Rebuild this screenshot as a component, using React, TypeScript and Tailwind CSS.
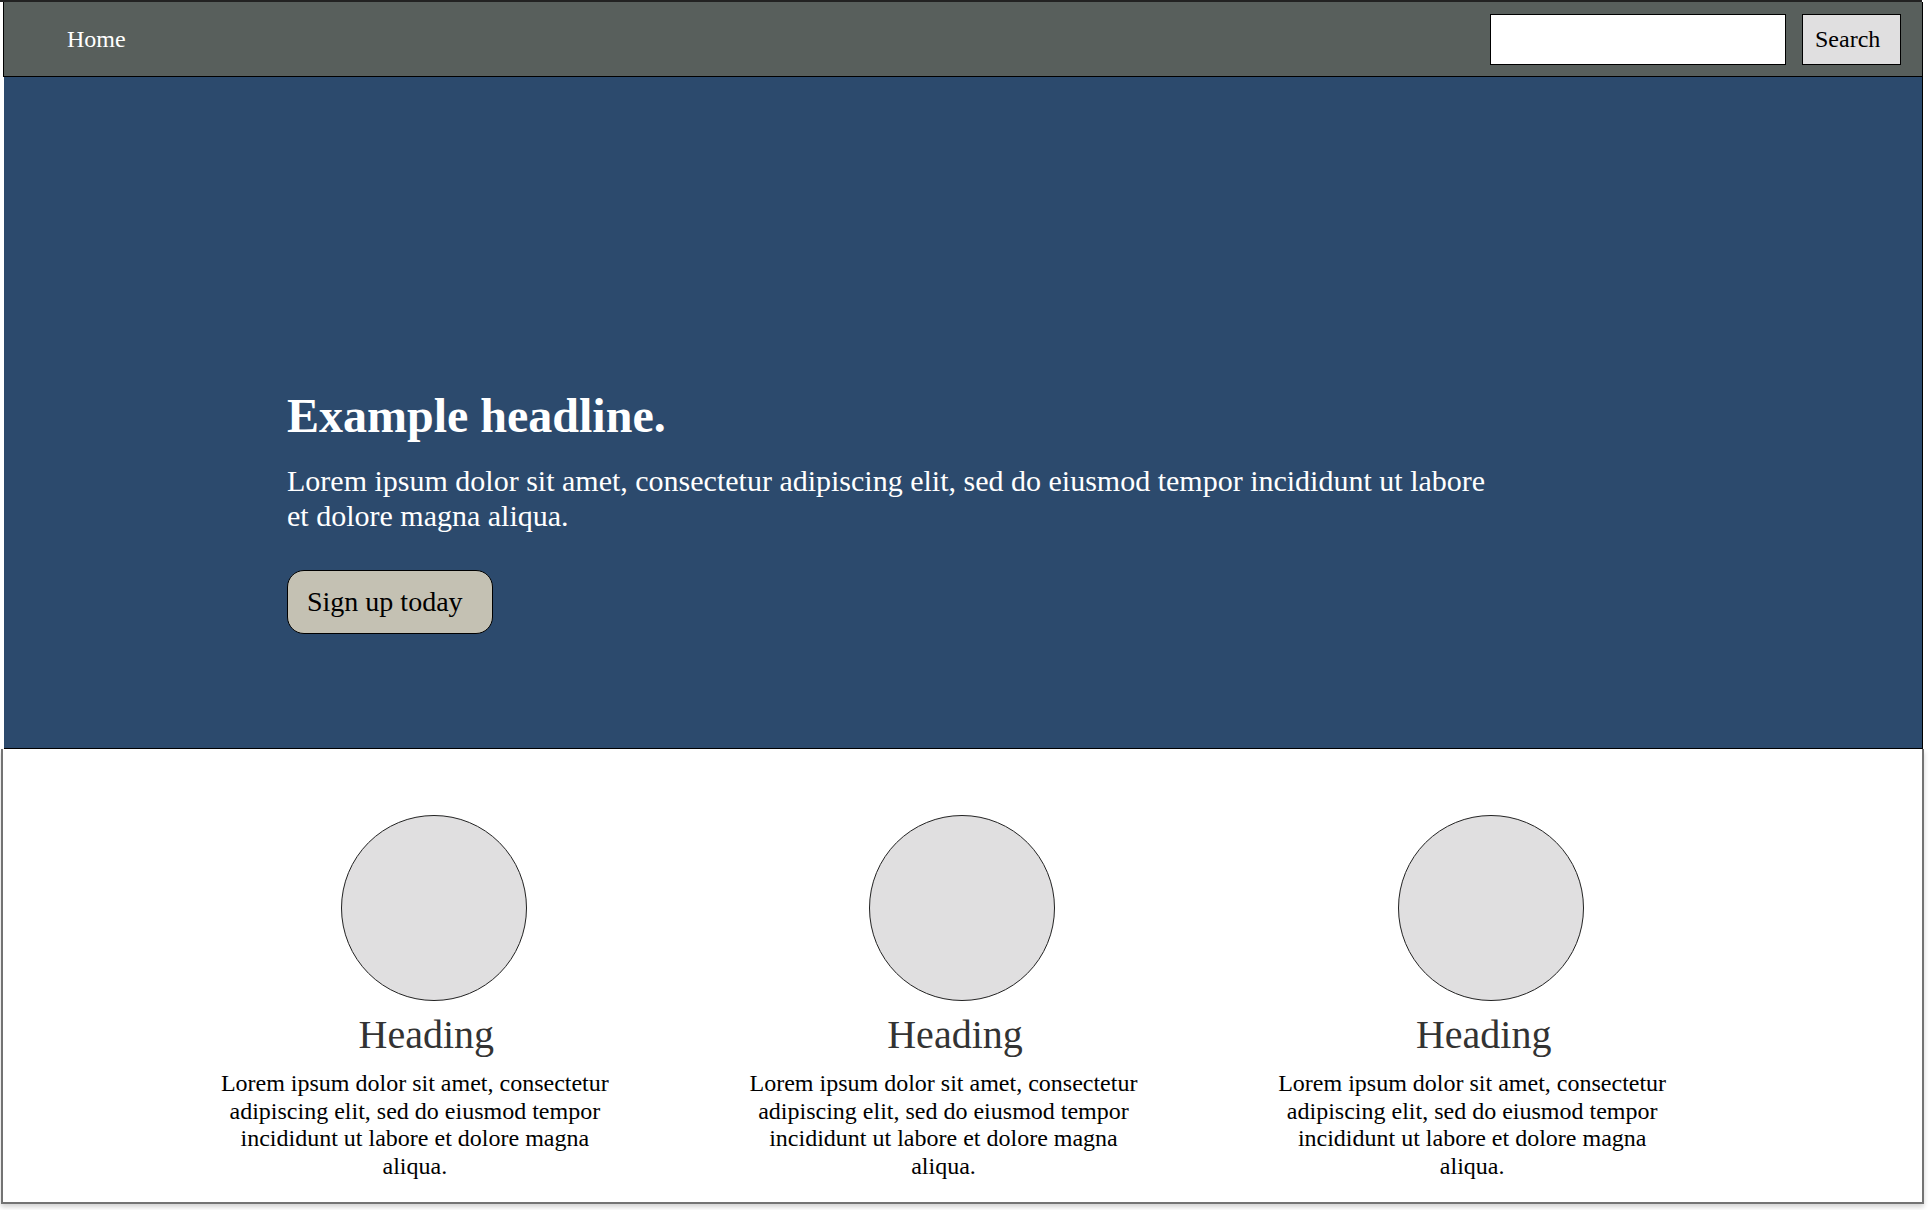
import React from "react";

const serif = "font-['Liberation_Serif','Times_New_Roman',serif]";

function Feature() {
  return (
    <div className="flex flex-col items-center">
      <div className="w-[186px] h-[186px] rounded-full bg-[#e0dfe0] border border-[#222]" />
      <h2 className="mt-[12px] mr-[15px] text-[40px] leading-[44px] text-[#333] font-normal">Heading</h2>
      <p className="mt-[13px] mr-[38px] w-[400px] text-center text-[24px] leading-[27.6px] text-black">
        Lorem ipsum dolor sit amet, consectetur adipiscing elit, sed do eiusmod tempor incididunt ut labore et dolore magna aliqua.
      </p>
    </div>
  );
}

export default function App() {
  return (
    <div className={`${serif} w-[1932px] h-[1210px] bg-white flex flex-col`}>
      <div className="h-[2px] w-[1922px] bg-[#222]" />
      <nav className="ml-[3px] w-[1920px] h-[75px] bg-[#585f5c] border-x border-b border-black flex items-center pl-[63px] pr-[21px]">
        <a className="text-white text-[24px] leading-[27px]">Home</a>
        <div className="ml-auto flex items-center gap-[16px]">
          <input
            type="text"
            className="w-[296px] h-[51px] bg-white border border-black outline-none px-2 text-[22px]"
          />
          <button className="w-[99px] h-[51px] bg-[#e0dfe0] border border-black text-left pl-[12px] text-[24px] text-black">
            Search
          </button>
        </div>
      </nav>
      <section className="ml-[4px] w-[1919px] h-[672px] bg-[#2c4a6d] border-r border-b border-black pt-[312px] pl-[283px]">
        <div className="w-[1220px]">
          <h1 className="text-[48px] leading-[53px] font-bold text-white">Example headline.</h1>
          <p className="mt-[22px] text-[30px] leading-[34.5px] text-white">
            Lorem ipsum dolor sit amet, consectetur adipiscing elit, sed do eiusmod tempor incididunt ut labore et dolore magna aliqua.
          </p>
          <button className="mt-[37px] w-[206px] h-[64px] rounded-[17px] bg-[#c4c1b3] border border-black text-left pl-[19px] text-[28px] text-black">
            Sign up today
          </button>
        </div>
      </section>
      <section className="ml-[1px] w-[1923px] h-[455px] bg-white border-x-[2px] border-b-[2px] border-[#737373] shadow-[0_3px_5px_rgba(0,0,0,0.18)] pt-[66px]">
        <div className="w-[1586px] mx-auto grid grid-cols-3">
          <Feature />
          <Feature />
          <Feature />
        </div>
      </section>
    </div>
  );
}
